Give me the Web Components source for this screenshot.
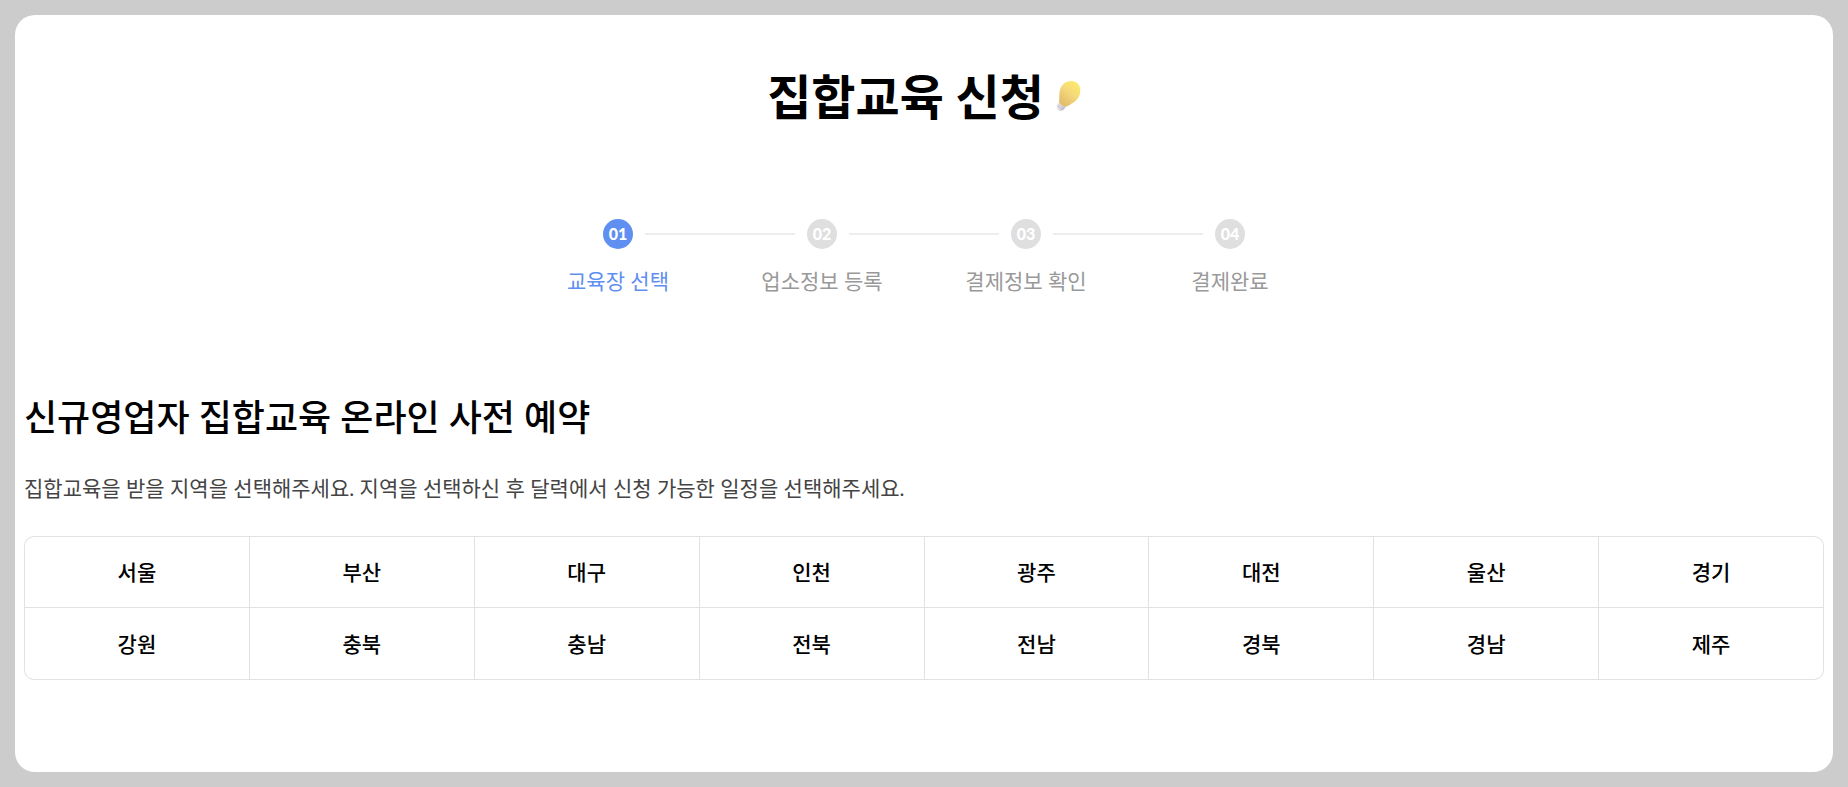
<!DOCTYPE html>
<html lang="ko">
<head>
<meta charset="utf-8">
<meta name="viewport" content="width=device-width, initial-scale=1">
<title>집합교육 신청</title>
<style>
  body { margin: 0; background: #ccc; color: #000; font-family: Lato, "Noto Sans CJK KR", sans-serif; }
</style>
</head>
<body>
<edu-card>
  <edu-title>집합교육 신청</edu-title>
  <edu-steps>
    <edu-step number="01" current>교육장 선택</edu-step>
    <edu-step number="02">업소정보 등록</edu-step>
    <edu-step number="03">결제정보 확인</edu-step>
    <edu-step number="04" last>결제완료</edu-step>
  </edu-steps>
  <edu-section>
    <span slot="heading">신규영업자 집합교육 온라인 사전 예약</span>
    <span slot="guide">집합교육을 받을 지역을 선택해주세요. 지역을 선택하신 후 달력에서 신청 가능한 일정을 선택해주세요.</span>
    <region-picker regions="서울 부산 대구 인천 광주 대전 울산 경기 강원 충북 충남 전북 전남 경북 경남 제주"></region-picker>
  </edu-section>
</edu-card>
<script>
  const define = (name, html, setup) => customElements.define(name, class extends HTMLElement {
    connectedCallback() {
      if (this.shadowRoot) return;
      this.attachShadow({ mode: "open" }).innerHTML = html;
      if (setup) setup(this, this.shadowRoot);
    }
  });

  define("edu-card", `
    <style>
      :host { display: block; padding: 15px; }
      main { box-sizing: border-box; min-height: calc(100vh - 30px); padding: 48px 9px; border-radius: 20px; background: #fff; }
    </style>
    <main><slot></slot></main>`);

  define("edu-title", `
    <style>
      :host { display: block; }
      h1 { display: flex; align-items: center; justify-content: center; gap: 12px; margin: 0; font-size: 48px; line-height: 68px; font-weight: 700; }
      svg { width: 25px; height: 32px; }
    </style>
    <h1><slot></slot>
      <svg viewBox="4 1 25 32" aria-hidden="true">
        <defs>
          <linearGradient id="glass" x1="0.8" y1="0.1" x2="0.25" y2="0.9">
            <stop offset="0" stop-color="#fbe96a"/><stop offset="0.45" stop-color="#f5d97a"/><stop offset="1" stop-color="#e3bf6c"/>
          </linearGradient>
          <linearGradient id="base" x1="0" y1="0" x2="1" y2="1">
            <stop offset="0" stop-color="#f4f3f8"/><stop offset="0.55" stop-color="#dddce6"/><stop offset="1" stop-color="#9c9aa9"/>
          </linearGradient>
        </defs>
        <path d="M6.500 22 14 26.500 12.500 28.500 11 30 8.500 31 5.500 29.500 4.500 26.500Z" fill="url(#base)"/>
        <path d="M5.200 26 11.500 29.500M6 24.500 12.500 28" stroke="#b9b8c6" stroke-width=".7"/>
        <path d="M7 22.500C7.500 19 6.800 14 8 10 9.500 4.500 13.500 1 19 1 25 1 28.300 5 28.300 10.500 28.300 16 25.500 20 21.500 22.500 19 24 17 25.500 14.500 26.500 11 26.500 8.500 25 7 22.500Z" fill="url(#glass)"/>
      </svg>
    </h1>`);

  define("edu-steps", `
    <style>
      :host { display: block; margin-top: 88px; }
      div { display: grid; grid-template-columns: repeat(4, 1fr); max-width: 816px; margin: 0 auto; }
    </style>
    <div role="list"><slot></slot></div>`);

  define("edu-step", `
    <style>
      :host { display: block; color: #999; --dot: #dfdfdf; }
      :host([current]) { color: #5f8ff0; --dot: #5f8ff0; }
      .track { display: grid; grid-template-columns: 1fr 30px 1fr; align-items: center; }
      b { grid-column: 2; height: 30px; border-radius: 50%; background: var(--dot); color: #fff; text-align: center; font-size: 16px; line-height: 30px; font-weight: 900; }
      i { width: calc(200% - 24px); height: 2px; margin-left: 12px; background: #eee; }
      :host([last]) i { display: none; }
      p { margin: 16px 0 0; text-align: center; font-size: 21px; line-height: 32px; }
    </style>
    <div class="track"><b></b><i></i></div>
    <p><slot></slot></p>`,
    (host, root) => {
      host.setAttribute("role", "listitem");
      if (host.hasAttribute("current")) host.setAttribute("aria-current", "step");
      root.querySelector("b").textContent = host.getAttribute("number");
    });

  define("edu-section", `
    <style>
      :host { display: block; margin-top: 94px; }
      h2 { margin: 0; font-size: 36px; line-height: 52px; font-weight: 500; }
      p { margin: 29px 0 32px; color: #444; font-size: 21px; line-height: 32px; }
    </style>
    <section>
      <h2><slot name="heading"></slot></h2>
      <p><slot name="guide"></slot></p>
      <slot></slot>
    </section>`);

  define("region-picker", `
    <style>
      :host { display: block; }
      div { display: grid; grid-template-columns: repeat(8, 1fr); grid-template-rows: 70px 71px; gap: 1px; overflow: hidden; border: 1px solid #e2e2e2; border-radius: 10px; background: #e2e2e2; }
      button { margin: 0; padding: 0; border: 0; background: #fff; color: #000; font: 500 21px/30px Lato, "Noto Sans CJK KR", sans-serif; cursor: pointer; }
      button:hover { background: #f5f8ff; }
    </style>
    <div role="group" aria-label="지역 선택"></div>`,
    (host, root) => {
      const group = root.querySelector("div");
      for (const name of host.getAttribute("regions").split(" ")) {
        const button = document.createElement("button");
        button.type = "button";
        button.textContent = name;
        group.append(button);
      }
    });
</script>
</body>
</html>
